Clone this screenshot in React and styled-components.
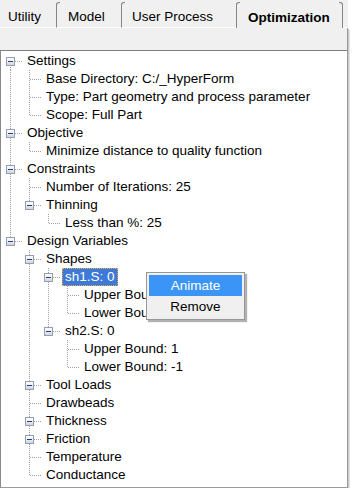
import React from "react";
import { styled, createGlobalStyle } from "styled-components";

const GlobalStyle = createGlobalStyle`
  body {
    margin: 0;
    background: #ffffff;
    font-family: "Liberation Sans", Arial, sans-serif;
    font-size: 13.5px;
    color: #000;
  }
`;

const Frame = styled.div`
  position: relative;
  width: 348px;
  background: #f0f0f0;
`;

const TabBar = styled.div`
  display: flex;
  align-items: flex-end;
  height: 28px;
  background: #f0f0f0;
`;

const Tab = styled.div`
  position: relative;
  box-sizing: border-box;
  flex: none;
  width: ${(p) => p.$w}px;
  height: 24px;
  padding: 2px 0 0 ${(p) => p.$pad}px;
  display: flex;
  align-items: center;
  border-left: ${(p) => (p.$first ? "none" : "1px solid #858585")};
  border-right: ${(p) => (p.$active ? "1px solid #858585" : "none")};
  border-bottom: ${(p) => (p.$active ? "none" : "1px solid #ffffff")};
  font-weight: ${(p) => (p.$active ? "bold" : "normal")};
  white-space: nowrap;

  &::before {
    content: "";
    display: ${(p) => (p.$first ? "none" : "block")};
    position: absolute;
    left: -1px;
    top: -2px;
    width: 3px;
    height: 3px;
    border-left: 1px solid #858585;
    border-top: 1px solid #858585;
    border-top-left-radius: 3px;
  }

  &::after {
    content: "";
    display: ${(p) => (p.$active ? "block" : "none")};
    position: absolute;
    right: -1px;
    top: -2px;
    width: 3px;
    height: 3px;
    border-right: 1px solid #858585;
    border-top: 1px solid #858585;
    border-top-right-radius: 3px;
  }
`;

const TabFiller = styled.div`
  flex: 1;
  height: 24px;
  border-bottom: 1px solid #ffffff;
`;

const Pane = styled.div`
  border-right: 1px solid #9a9a9a;
  box-shadow: 1px 1px 0 #c9c9c9, 2px 2px 0 #e2e2e2;
`;

const Toolbar = styled.div`
  height: 22px;
  background: #f0f0f0;
`;

const TreePanel = styled.div`
  box-sizing: border-box;
  height: 438px;
  padding: 1px 0 0 1px;
  background: #ffffff;
  border-top: 1px solid #7e7e7e;
  border-left: 1px solid #8a8a8a;
  border-bottom: 1px solid #9a9a9a;
`;

const Row = styled.div`
  display: flex;
  align-items: center;
  height: 18px;
`;

const dotsV = `
  background-image: linear-gradient(to bottom, #a0a0a0 50%, transparent 50%);
  background-size: 1px 2px;
`;

const dotsH = `
  background-image: linear-gradient(to right, #a0a0a0 50%, transparent 50%);
  background-size: 2px 1px;
`;

const Guide = styled.div`
  position: relative;
  flex: none;
  width: 19px;
  height: 18px;

  &::before {
    content: "";
    display: ${(p) => (p.$line ? "block" : "none")};
    position: absolute;
    left: 8px;
    top: 0;
    bottom: 0;
    width: 1px;
    ${dotsV}
  }
`;

const Joint = styled.div`
  position: relative;
  flex: none;
  width: 19px;
  height: 18px;

  &::before {
    content: "";
    position: absolute;
    left: 8px;
    top: ${(p) => (p.$top ? "0" : "9px")};
    bottom: ${(p) => (p.$bottom ? "0" : "9px")};
    width: 1px;
    ${dotsV}
  }

  &::after {
    content: "";
    position: absolute;
    left: 9px;
    right: -2px;
    top: 9px;
    height: 1px;
    ${dotsH}
  }
`;

const Expander = styled.div`
  position: absolute;
  z-index: 1;
  left: 4px;
  top: 5px;
  box-sizing: border-box;
  width: 9px;
  height: 9px;
  border: 1px solid #93a0b4;
  background: linear-gradient(to bottom, #ffffff 0%, #e8e8ea 60%, #cfd3da 100%);

  &::after {
    content: "";
    position: absolute;
    left: 1px;
    top: 3px;
    width: 5px;
    height: 1px;
    background: #23408e;
  }
`;

const Label = styled.div`
  box-sizing: border-box;
  margin-left: 3px;
  padding: 0 3px;
  height: 18px;
  line-height: 18px;
  white-space: nowrap;
  color: ${(p) => (p.$selected ? "#ffffff" : "#000000")};
  background: ${(p) => (p.$selected ? "#3d79d6" : "transparent")};
  outline: ${(p) => (p.$selected ? "1px dotted #f2a93a" : "none")};
  outline-offset: -1px;
`;

const Menu = styled.div`
  position: absolute;
  left: 146px;
  top: 272px;
  box-sizing: border-box;
  width: 99px;
  padding: 2px;
  background: #f0f0f0;
  border: 1px solid #979797;
  box-shadow: 2px 2px 1px rgba(0, 0, 0, 0.3);
  z-index: 5;
`;

const MenuItem = styled.div`
  height: 21px;
  line-height: 21px;
  text-align: center;
  color: ${(p) => (p.$hot ? "#ffffff" : "#000000")};
  background: ${(p) => (p.$hot ? "#3b95f6" : "transparent")};
`;

const tabs = [
  { label: "Utility", w: 56, pad: 8, first: true },
  { label: "Model", w: 65, pad: 11 },
  { label: "User Process", w: 115, pad: 10 },
  { label: "Optimization", w: 107, pad: 11, active: true },
];

const bounds = () => [{ label: "Upper Bound: 1" }, { label: "Lower Bound: -1" }];

const tree = [
  {
    label: "Settings",
    children: [
      { label: "Base Directory: C:/_HyperForm" },
      { label: "Type: Part geometry and process parameter" },
      { label: "Scope: Full Part" },
    ],
  },
  { label: "Objective", children: [{ label: "Minimize distance to quality function" }] },
  {
    label: "Constraints",
    children: [
      { label: "Number of Iterations: 25" },
      { label: "Thinning", children: [{ label: "Less than %: 25" }] },
    ],
  },
  {
    label: "Design Variables",
    children: [
      {
        label: "Shapes",
        children: [
          { label: "sh1.S: 0", selected: true, children: bounds() },
          { label: "sh2.S: 0", children: bounds() },
        ],
      },
      { label: "Tool Loads", children: [] },
      { label: "Drawbeads" },
      { label: "Thickness", children: [] },
      { label: "Friction", children: [] },
      { label: "Temperature" },
      { label: "Conductance" },
    ],
  },
];

function flatten(nodes, depth = 0, guides = [], out = []) {
  nodes.forEach((node, i) => {
    const isLast = i === nodes.length - 1;
    out.push({
      label: node.label,
      selected: node.selected,
      hasBox: !!node.children,
      guides,
      top: !(depth === 0 && i === 0),
      bottom: !isLast,
    });
    if (node.children) flatten(node.children, depth + 1, [...guides, !isLast], out);
  });
  return out;
}

const rows = flatten(tree);

export default function App() {
  return (
    <>
      <GlobalStyle />
      <Frame>
        <TabBar>
          {tabs.map((t) => (
            <Tab key={t.label} $w={t.w} $pad={t.pad} $first={t.first} $active={t.active}>
              {t.label}
            </Tab>
          ))}
          <TabFiller />
        </TabBar>
        <Pane>
          <Toolbar />
          <TreePanel>
            {rows.map((r, i) => (
              <Row key={i}>
                {r.guides.map((g, k) => (
                  <Guide key={k} $line={g} />
                ))}
                <Joint $top={r.top} $bottom={r.bottom}>
                  {r.hasBox && <Expander />}
                </Joint>
                <Label $selected={r.selected}>{r.label}</Label>
              </Row>
            ))}
          </TreePanel>
        </Pane>
        <Menu>
          <MenuItem $hot>Animate</MenuItem>
          <MenuItem>Remove</MenuItem>
        </Menu>
      </Frame>
    </>
  );
}
